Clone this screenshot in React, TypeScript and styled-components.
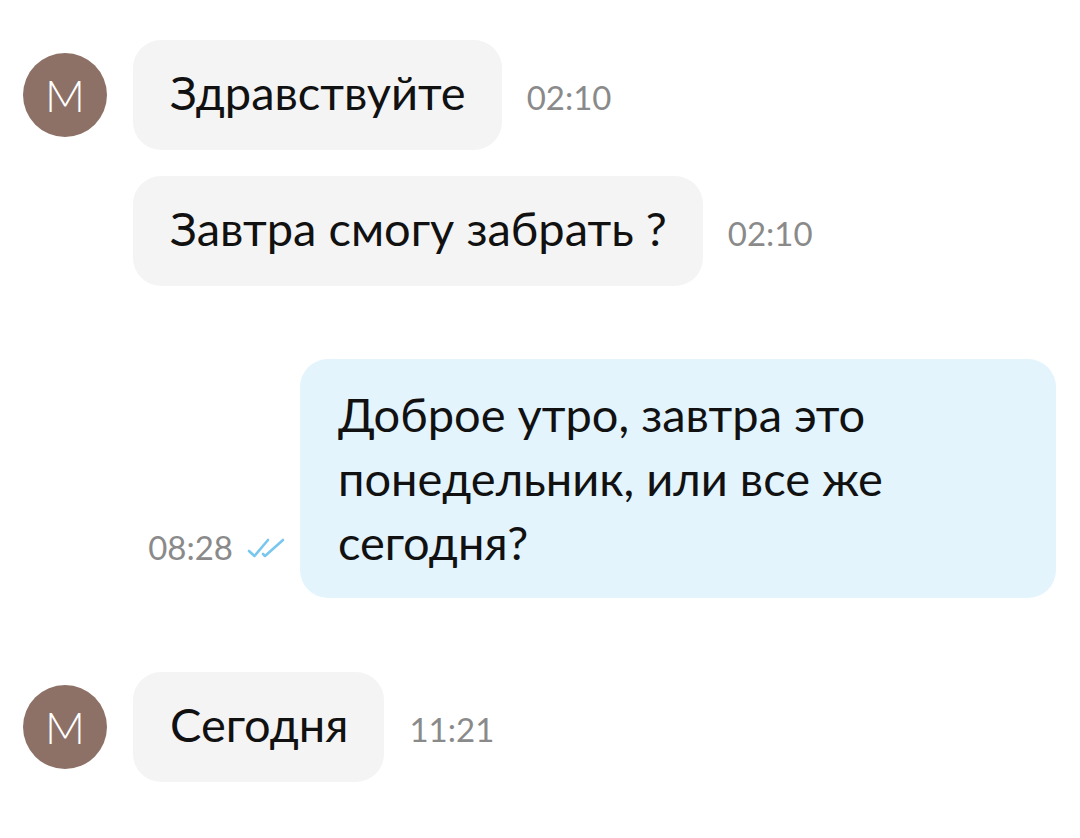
import React from "react";
import styled, { createGlobalStyle } from "styled-components";

const Global = createGlobalStyle`
  html, body { margin: 0; padding: 0; background: #ffffff; }
  body { font-family: Lato, "Noto Sans", sans-serif; color: #111; }
`;

const Page = styled.div`
  width: 1080px;
  height: 838px;
  box-sizing: border-box;
  padding: 40px 24px 0 23px;
  display: flex;
  flex-direction: column;
`;

const Row = styled.div<{ $mt?: number }>`
  display: flex;
  align-items: center;
  gap: 26px;
  margin-top: ${(p) => p.$mt ?? 0}px;
`;

const OutRow = styled.div<{ $mt?: number }>`
  display: flex;
  justify-content: flex-end;
  align-items: last baseline;
  gap: 15px;
  margin-top: ${(p) => p.$mt ?? 0}px;
`;

const Avatar = styled.div`
  width: 84px;
  height: 84px;
  flex: none;
  border-radius: 50%;
  background: #8d7166;
  color: #fff;
  display: flex;
  align-items: center;
  justify-content: center;
  font-size: 44px;
  font-weight: 300;
`;

const Spacer = styled.div`
  width: 84px;
  flex: none;
`;

const Group = styled.div`
  display: flex;
  align-items: baseline;
  gap: 25px;
`;

const Bubble = styled.div<{ $out?: boolean }>`
  box-sizing: border-box;
  background: ${(p) => (p.$out ? "#e3f4fd" : "#f4f4f4")};
  border-radius: 28px;
  padding: ${(p) => (p.$out ? "23px 38px 24px 38px" : "25px 36px 31px 37px")};
  font-size: 47px;
  line-height: 54px;
  color: #111;
  ${(p) => (p.$out ? "width: 756px; line-height: 64px;" : "")}
`;

const Time = styled.span`
  font-size: 33px;
  color: #8a8a8a;
  font-weight: 400;
`;

const Meta = styled.div`
  display: flex;
  align-items: baseline;
  gap: 14px;
`;

const CheckIcon = styled.svg`
  align-self: center;
  flex: none;
  margin-top: 2px;
`;

const Check = () => (
  <CheckIcon width="38" height="20" viewBox="0 0 38 20" fill="none">
    <path d="M2 13 L7.5 18 L21 2" stroke="#79c7ee" strokeWidth="2.6" strokeLinecap="round" strokeLinejoin="round" />
    <path d="M16 16 L18 18 L36 2" stroke="#79c7ee" strokeWidth="2.6" strokeLinecap="round" strokeLinejoin="round" />
  </CheckIcon>
);

export default function App() {
  return (
    <>
      <Global />
      <Page>
        <Row>
          <Avatar>M</Avatar>
          <Group>
            <Bubble>Здравствуйте</Bubble>
            <Time>02:10</Time>
          </Group>
        </Row>
        <Row $mt={26}>
          <Spacer />
          <Group>
            <Bubble>Завтра смогу забрать ?</Bubble>
            <Time>02:10</Time>
          </Group>
        </Row>
        <OutRow $mt={73}>
          <Meta>
            <Time>08:28</Time>
            <Check />
          </Meta>
          <Bubble $out>
            Доброе утро, завтра это
            <br />
            понедельник, или все же
            <br />
            сегодня?
          </Bubble>
        </OutRow>
        <Row $mt={74}>
          <Avatar>M</Avatar>
          <Group>
            <Bubble>Сегодня</Bubble>
            <Time>11:21</Time>
          </Group>
        </Row>
      </Page>
    </>
  );
}
